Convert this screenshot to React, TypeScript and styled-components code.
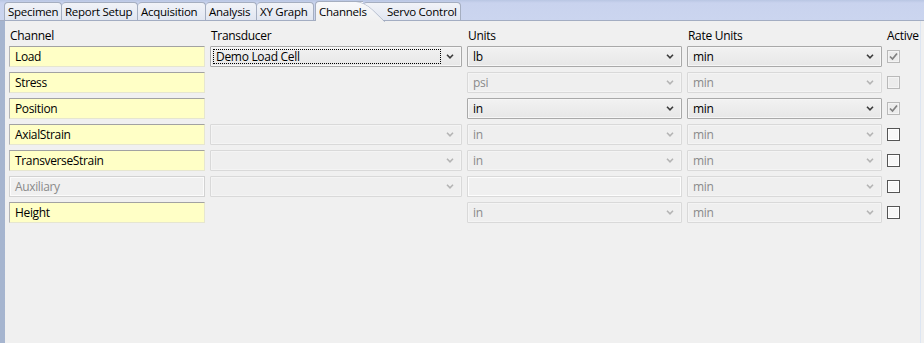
import styled, { createGlobalStyle, css } from "styled-components";

const GlobalStyle = createGlobalStyle`
  html, body {
    margin: 0;
    padding: 0;
    background: #f0f0f0;
  }
  body {
    font-family: "Open Sans", "Noto Sans", sans-serif;
    font-size: 11px;
    color: #000;
  }
`;

type Field = { value: string; enabled: boolean; focus?: boolean; kind?: "text" };
type ActiveState = "checked" | "disabled" | "unchecked";
type Row = {
  name: string;
  channelEnabled: boolean;
  transducer: Field | null;
  units: Field;
  rate: Field;
  active: ActiveState;
};

const tabs = [
  { label: "Specimen", w: 58 },
  { label: "Report Setup", w: 76 },
  { label: "Acquisition", w: 68 },
  { label: "Analysis", w: 51 },
  { label: "XY Graph", w: 57 },
  { label: "Channels", w: 48, active: true },
  { label: "Servo Control", w: 98, pad: 24 },
];

const rows: Row[] = [
  {
    name: "Load",
    channelEnabled: true,
    transducer: { value: "Demo Load Cell", enabled: true, focus: true },
    units: { value: "lb", enabled: true },
    rate: { value: "min", enabled: true },
    active: "checked",
  },
  {
    name: "Stress",
    channelEnabled: true,
    transducer: null,
    units: { value: "psi", enabled: false },
    rate: { value: "min", enabled: false },
    active: "disabled",
  },
  {
    name: "Position",
    channelEnabled: true,
    transducer: null,
    units: { value: "in", enabled: true },
    rate: { value: "min", enabled: true },
    active: "checked",
  },
  {
    name: "AxialStrain",
    channelEnabled: true,
    transducer: { value: "", enabled: false },
    units: { value: "in", enabled: false },
    rate: { value: "min", enabled: false },
    active: "unchecked",
  },
  {
    name: "TransverseStrain",
    channelEnabled: true,
    transducer: { value: "", enabled: false },
    units: { value: "in", enabled: false },
    rate: { value: "min", enabled: false },
    active: "unchecked",
  },
  {
    name: "Auxiliary",
    channelEnabled: false,
    transducer: { value: "", enabled: false },
    units: { value: "", enabled: false, kind: "text" },
    rate: { value: "min", enabled: false },
    active: "unchecked",
  },
  {
    name: "Height",
    channelEnabled: true,
    transducer: null,
    units: { value: "in", enabled: false },
    rate: { value: "min", enabled: false },
    active: "unchecked",
  },
];

const Chevron = ({ enabled }: { enabled: boolean }) => (
  <svg width="8" height="5" viewBox="0 0 8 5">
    <path
      d="M1 0.8 L4 3.8 L7 0.8"
      fill="none"
      stroke={enabled ? "#3c3c3c" : "#b4b4b4"}
      strokeWidth="1.6"
    />
  </svg>
);

const Combo = ({ field }: { field: Field }) => {
  if (field.kind === "text") return <DisabledText />;
  return (
    <Select $enabled={field.enabled}>
      <SelectValue $focus={!!field.focus}>{field.value}</SelectValue>
      <Arrow>
        <Chevron enabled={field.enabled} />
      </Arrow>
    </Select>
  );
};

const Check = ({ state }: { state: ActiveState }) => (
  <CheckBox $state={state}>
    {state === "checked" && (
      <svg width="11" height="11" viewBox="0 0 11 11">
        <path d="M2 5.5 L4.5 8 L9 2.5" fill="none" stroke="#808080" strokeWidth="1.7" />
      </svg>
    )}
  </CheckBox>
);

export default function App() {
  return (
    <Window>
      <GlobalStyle />
      <TabStrip>
        {tabs.map((t) => (
          <Tab key={t.label} $w={t.w} $pad={t.pad ?? 3} $active={!!t.active}>
            {t.label}
          </Tab>
        ))}
      </TabStrip>
      <Panel>
        <Grid>
          <Header>Channel</Header>
          <Header>Transducer</Header>
          <Header>Units</Header>
          <Header>Rate Units</Header>
          <Header $tight>Active</Header>
          {rows.map((r) => (
            <Line key={r.name}>
              <ChannelBox $enabled={r.channelEnabled}>{r.name}</ChannelBox>
              {r.transducer ? <Combo field={r.transducer} /> : <span />}
              <Combo field={r.units} />
              <Combo field={r.rate} />
              <CheckCell>
                <Check state={r.active} />
              </CheckCell>
            </Line>
          ))}
        </Grid>
      </Panel>
    </Window>
  );
}

const Window = styled.div`
  width: 924px;
  height: 343px;
  display: flex;
  flex-direction: column;
  overflow: hidden;
`;

const TabStrip = styled.div`
  height: 21px;
  flex: none;
  display: flex;
  align-items: flex-end;
  padding-left: 4px;
  background: linear-gradient(#b9c6e3 0px, #c9d3ee 3px, #cbd5ef 100%);
  border-bottom: 1px solid #a3adc2;
  box-sizing: border-box;
  position: relative;
`;

const tabFill = "linear-gradient(#f7f8fb, #f0f0f0)";

const Tab = styled.div<{ $w: number; $pad: number; $active: boolean }>`
  position: relative;
  width: ${(p) => p.$w}px;
  height: 18px;
  box-sizing: border-box;
  padding-left: ${(p) => p.$pad}px;
  display: flex;
  align-items: center;
  white-space: nowrap;
  font-size: 11.5px;
  letter-spacing: -0.25px;
  color: #000;
  background: linear-gradient(#f1f3f8, #e1e6f1);
  border: 1px solid #a5aec0;
  border-bottom: none;
  border-left-width: 0;
  border-radius: 4px 4px 0 0;
  &:first-child {
    border-left-width: 1px;
  }
  ${(p) =>
    p.$active &&
    css`
      height: 20px;
      margin-bottom: -1px;
      margin-left: 1px;
      z-index: 2;
      border-left-width: 1px;
      border-right: none;
      border-radius: 4px 0 0 0;
      background: ${tabFill};
      &::after {
        content: "";
        position: absolute;
        z-index: -1;
        top: -1px;
        left: calc(100% - 30px);
        width: 30px;
        height: 20px;
        background: ${tabFill};
        border-top: 1px solid #a5aec0;
        border-right: 1px solid #a5aec0;
        border-radius: 0 9px 0 0;
        transform: skewX(46deg);
        transform-origin: top left;
      }
    `}
`;

const Panel = styled.div`
  flex: 1;
  background: #f0f0f0;
  width: 921px;
  box-sizing: border-box;
  border-left: 5px solid;
  border-image: linear-gradient(90deg, #a6b5cf, #8ea3c4 30%, #b8c8e0 60%, #dde6f3) 1;
  border-right: 1px solid #d6d6d6;
  padding: 7px 0 0 4px;
`;

const Grid = styled.div`
  display: grid;
  grid-template-columns: 196px 252px 215px 195px 13px;
  column-gap: 5px;
  row-gap: 5px;
  grid-template-rows: 13px;
  grid-auto-rows: 21px;
`;

const Line = styled.div`
  display: contents;
`;

const Header = styled.div<{ $tight?: boolean }>`
  font-size: 12px;
  letter-spacing: -0.3px;
  line-height: 15px;
  height: 13px;
  padding-left: ${(p) => (p.$tight ? "0" : "1px")};
  white-space: nowrap;
`;

const ChannelBox = styled.div<{ $enabled: boolean }>`
  box-sizing: border-box;
  height: 21px;
  display: flex;
  align-items: center;
  padding-left: 5px;
  font-size: 12px;
  letter-spacing: -0.35px;
  background: ${(p) => (p.$enabled ? "#ffffc6" : "#f0f0f0")};
  color: ${(p) => (p.$enabled ? "#000" : "#8a8a8a")};
  border: 1px solid;
  border-color: ${(p) =>
    p.$enabled ? "#a2a2a2 #e6e6d0 #e6e6d0 #b4b4b4" : "#d2d2d2 #d2d2d2 #d2d2d2 #d2d2d2"};
  box-shadow: ${(p) => (p.$enabled ? "none" : "inset 0 0 0 1px #fbfbfb")};
`;

const Select = styled.div<{ $enabled: boolean }>`
  box-sizing: border-box;
  height: 21px;
  display: flex;
  align-items: center;
  font-size: 12px;
  letter-spacing: -0.3px;
  border: 1px solid ${(p) => (p.$enabled ? "#a9a9a9" : "#d9d9d9")};
  border-radius: 1px;
  background: ${(p) =>
    p.$enabled ? "linear-gradient(#f2f2f2, #e7e7e7)" : "#efefef"};
  color: ${(p) => (p.$enabled ? "#000" : "#8a8a8a")};
  box-shadow: inset 0 0 0 1px ${(p) => (p.$enabled ? "#f6f6f6" : "#f4f4f4")};
`;

const SelectValue = styled.div<{ $focus: boolean }>`
  flex: 1;
  height: 15px;
  line-height: 14px;
  margin-left: 2px;
  padding-left: 2px;
  box-sizing: border-box;
  border: 1px dotted ${(p) => (p.$focus ? "#000" : "transparent")};
  white-space: nowrap;
`;

const Arrow = styled.div`
  width: 18px;
  flex: none;
  display: flex;
  align-items: center;
  justify-content: center;
  padding-right: 2px;
`;

const DisabledText = styled.div`
  box-sizing: border-box;
  height: 21px;
  border: 1px solid #dadada;
  box-shadow: inset 0 0 0 1px #fdfdfd;
  background: #f0f0f0;
`;

const CheckCell = styled.div`
  display: flex;
  align-items: center;
`;

const CheckBox = styled.div<{ $state: ActiveState }>`
  width: 13px;
  height: 13px;
  box-sizing: border-box;
  display: flex;
  align-items: center;
  justify-content: center;
  border: 1px solid ${(p) => (p.$state === "unchecked" ? "#555" : "#b9b9b9")};
  background: ${(p) => (p.$state === "unchecked" ? "#f7f7f7" : "#ececec")};
  box-shadow: inset 0 0 0 1px ${(p) => (p.$state === "unchecked" ? "#fff" : "#f4f4f4")};
`;
